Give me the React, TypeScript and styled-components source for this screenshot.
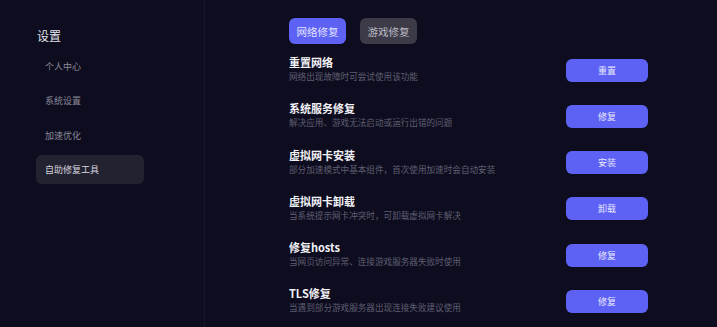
import React, { useState } from "react";
import styled, { createGlobalStyle } from "styled-components";

const Global = createGlobalStyle`
  html, body { margin: 0; padding: 0; background: #0e0d1f; }
  body { font-family: "Noto Sans CJK SC", "Noto Sans", sans-serif; }
  * { box-sizing: border-box; }
`;

const Page = styled.div`
  display: flex;
  width: 717px;
  height: 327px;
  background: #0e0d1f;
  overflow: hidden;
`;

const Sidebar = styled.aside`
  width: 205px;
  flex-shrink: 0;
  border-right: 1px solid #17162b;
  padding: 28px 0 0 36px;
  display: flex;
  flex-direction: column;
`;

const SideTitle = styled.div`
  color: #e4e3ec;
  font-size: 12px;
  line-height: 16px;
  padding-left: 1px;
  margin-bottom: 8px;
`;

const SideList = styled.nav`
  display: flex;
  flex-direction: column;
  gap: 5.3px;
`;

const SideItem = styled.div<{ $active?: boolean }>`
  width: 108px;
  height: 29px;
  border-radius: 6px;
  padding-left: 9px;
  display: flex;
  align-items: center;
  font-size: 9px;
  color: ${(p) => (p.$active ? "#d6d5df" : "#8a8999")};
  background: ${(p) => (p.$active ? "#232230" : "transparent")};
  cursor: pointer;
`;

const Main = styled.main`
  flex: 1;
  padding: 18px 0 0 84px;
  display: flex;
  flex-direction: column;
`;

const Tabs = styled.div`
  display: flex;
  gap: 14px;
  margin-bottom: 11px;
`;

const Tab = styled.button<{ $active?: boolean }>`
  width: 57px;
  height: 26px;
  border: none;
  border-radius: 6px;
  padding: 0;
  font-family: inherit;
  font-size: 10.5px;
  color: ${(p) => (p.$active ? "#e4e5ff" : "#bdbcc6")};
  background: ${(p) => (p.$active ? "#5d62f4" : "#3c3b47")};
  cursor: pointer;
`;

const List = styled.div`
  display: flex;
  flex-direction: column;
  gap: 18.25px;
  width: 359px;
`;

const Row = styled.div`
  display: flex;
  align-items: center;
  justify-content: space-between;
  height: 28px;
`;

const TextCol = styled.div`
  display: flex;
  flex-direction: column;
`;

const Title = styled.div`
  color: #f2f2f7;
  font-size: 11px;
  font-weight: 700;
  line-height: 14px;
`;

const Desc = styled.div`
  color: #5f5e72;
  font-size: 8.6px;
  line-height: 14px;
`;

const ActionButton = styled.button`
  width: 82px;
  height: 23px;
  margin-top: 2px;
  border: none;
  border-radius: 6px;
  background: #5d62f4;
  color: #e8e9ff;
  font-family: inherit;
  font-size: 9px;
  cursor: pointer;
`;

const menu = ["个人中心", "系统设置", "加速优化", "自助修复工具"];

const items = [
  { title: "重置网络", desc: "网络出现故障时可尝试使用该功能", action: "重置" },
  { title: "系统服务修复", desc: "解决应用、游戏无法启动或运行出错的问题", action: "修复" },
  { title: "虚拟网卡安装", desc: "部分加速模式中基本组件，首次使用加速时会自动安装", action: "安装" },
  { title: "虚拟网卡卸载", desc: "当系统提示网卡冲突时，可卸载虚拟网卡解决", action: "卸载" },
  { title: "修复hosts", desc: "当网页访问异常、连接游戏服务器失败时使用", action: "修复" },
  { title: "TLS修复", desc: "当遇到部分游戏服务器出现连接失败建议使用", action: "修复" },
];

export default function App() {
  const [tab, setTab] = useState(0);
  return (
    <>
      <Global />
      <Page>
        <Sidebar>
          <SideTitle>设置</SideTitle>
          <SideList>
            {menu.map((m, i) => (
              <SideItem key={m} $active={i === 3}>
                {m}
              </SideItem>
            ))}
          </SideList>
        </Sidebar>
        <Main>
          <Tabs>
            <Tab $active={tab === 0} onClick={() => setTab(0)}>网络修复</Tab>
            <Tab $active={tab === 1} onClick={() => setTab(1)}>游戏修复</Tab>
          </Tabs>
          <List>
            {items.map((it) => (
              <Row key={it.title}>
                <TextCol>
                  <Title>{it.title}</Title>
                  <Desc>{it.desc}</Desc>
                </TextCol>
                <ActionButton>{it.action}</ActionButton>
              </Row>
            ))}
          </List>
        </Main>
      </Page>
    </>
  );
}
